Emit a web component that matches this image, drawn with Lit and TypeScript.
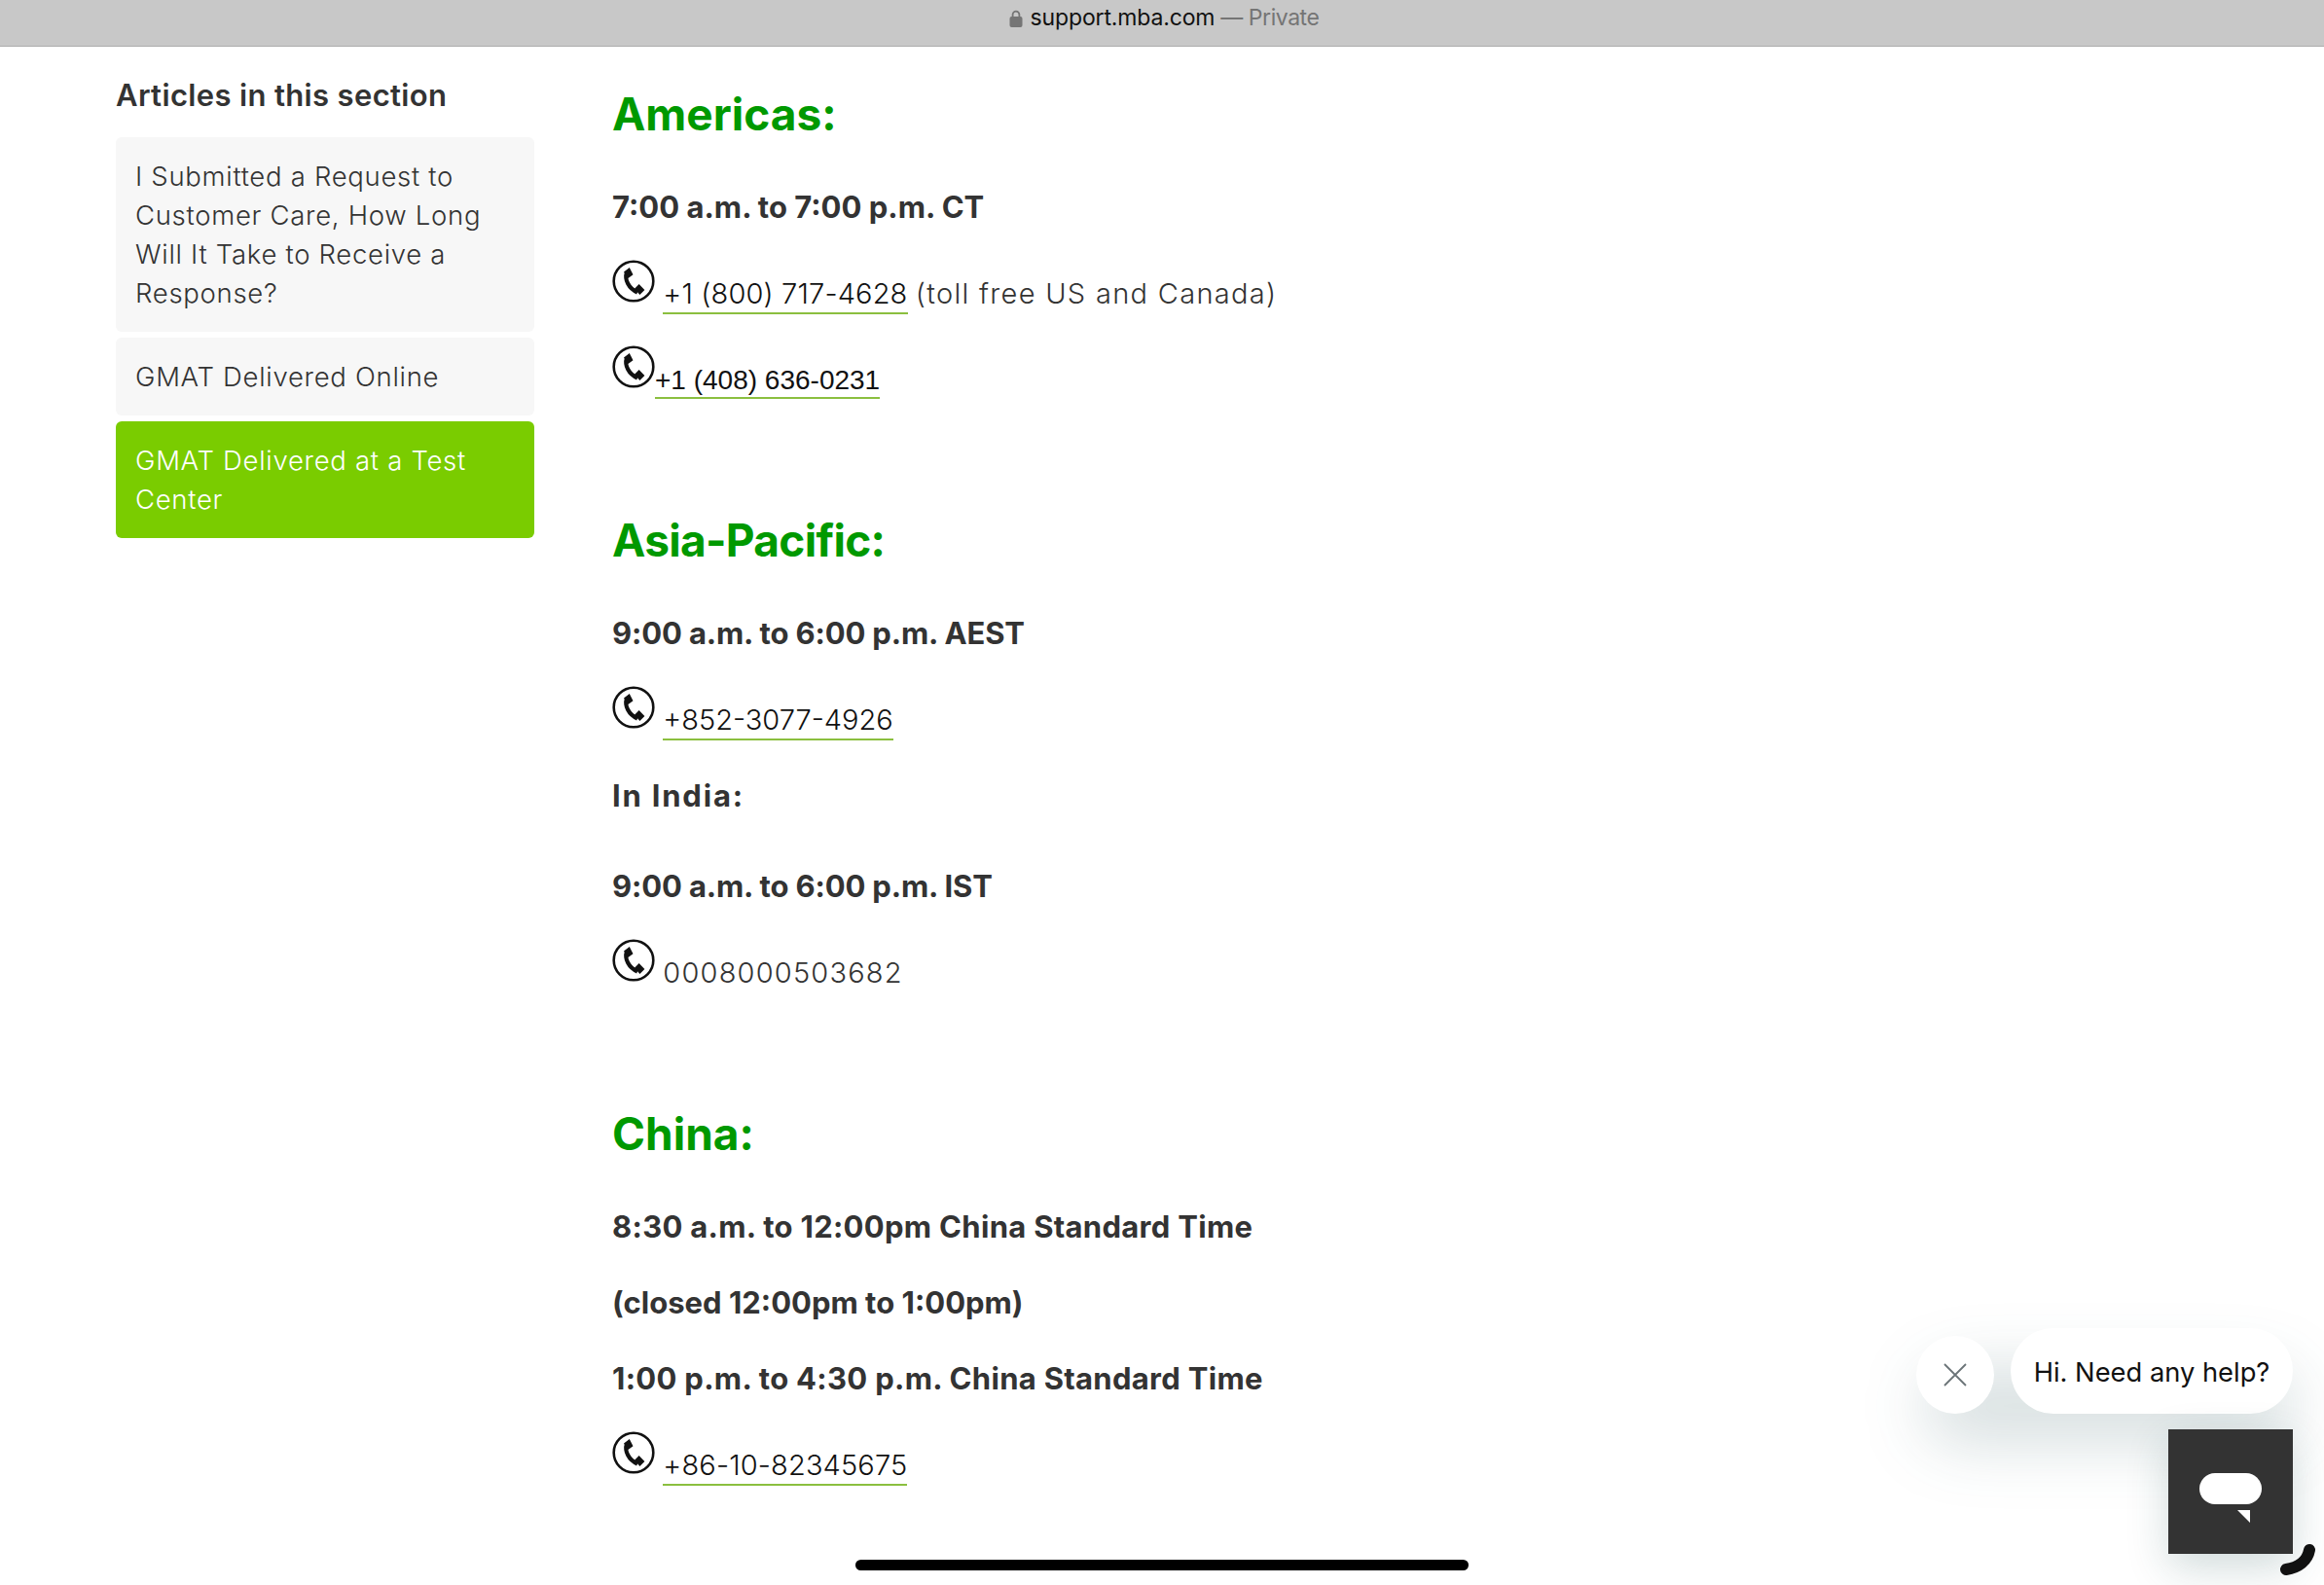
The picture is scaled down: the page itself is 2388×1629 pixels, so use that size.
import { LitElement, html, css } from "lit";
import { customElement } from "lit/decorators.js";

const phoneIcon = html`<svg class="ph" viewBox="0 0 44 44" aria-hidden="true">
  <circle cx="22" cy="22" r="20.3" fill="none" stroke="#111" stroke-width="2.6"></circle>
  <path d="M15 13 C12.5 20.5 17 29.5 26 33.5" fill="none" stroke="#111" stroke-width="4.2"></path>
  <path d="M12 12.5 L17.8 8 L21.5 15.2 L16.4 19 Z M23 29.8 L27.6 25 L33.4 31 L28.4 36 Z" fill="#111"></path>
</svg>`;

@customElement("app-root")
export class AppRoot extends LitElement {
  static styles = css`
    :host { display: block; width: 2388px; height: 1629px; position: relative; overflow: hidden; background: #fff; font-family: Inter, "Liberation Sans", sans-serif; color: #333; }
    .bar { height: 47px; background: #c8c8c8; border-bottom: 1px solid #adadad; display: flex; justify-content: center; align-items: flex-start; font-size: 23px; line-height: 37px; letter-spacing: -0.15px; color: #111; }
    .bar .inner { display: flex; align-items: center; margin-left: 4px; }
    .lock { width: 14px; height: 20px; margin-right: 8px; }
    .bar .dim { color: #757575; margin-left: 6px; letter-spacing: -0.45px; }
    .main { display: flex; padding-left: 119px; }
    .side { width: 430px; margin-right: 80px; flex: none; padding-top: 28px; }
    .side h3 { margin: 0 0 21px; font-size: 31px; line-height: 44px; font-weight: 600; letter-spacing: 0.35px; }
    .item { display: block; background: #f7f7f7; border-radius: 6px; padding: 20px; margin-bottom: 6px; font-size: 27.5px; line-height: 40px; font-weight: 300; letter-spacing: 0.7px; color: #333; }
    .item.on { background: #7acc00; color: #fff; }
    .content { flex: 1; padding-top: 43px; }
    h2 { margin: 0 0 50px; font-size: 46px; line-height: 52px; font-weight: 700; color: #090; }
    h2.next { margin-top: 86px; }
    h2.asia { letter-spacing: -0.7px; }
    p { margin: 0 0 38px; font-size: 31px; line-height: 40px; font-weight: 700; letter-spacing: 0.3px; }
    p.t0 { letter-spacing: 0; }
    p.t1 { letter-spacing: -0.15px; }
    p.india { margin-bottom: 53px; letter-spacing: 1.8px; }
    .row { margin: -4px 0 0; height: 88px; font-size: 29px; line-height: 44px; font-weight: 300; letter-spacing: 0.15px; color: #333; white-space: nowrap; }
    .row + .row { margin-top: 0; }
    .row.tight { height: 93px; }
    .ph { width: 44px; height: 44px; vertical-align: baseline; margin-bottom: 1px; }
    a { color: #111; text-decoration: none; border-bottom: 2px solid #8bbf3f; padding-bottom: 2px; }
    a.tightnum { letter-spacing: 0; }
    a.arial { font-family: "Liberation Sans", Arial, sans-serif; font-weight: 400; font-size: 28px; letter-spacing: 0; }
    .wide { letter-spacing: 1.3px; }
    .num { letter-spacing: 1.2px; }
    .item-link { border: 0; padding-bottom: 20px; }
    .shadow { position: absolute; left: 1975px; top: 1405px; width: 385px; height: 80px; border-radius: 40px; background: rgba(23,73,77,.17); filter: blur(32px); }
    .close { position: absolute; left: 1969px; top: 1373px; width: 80px; height: 80px; border-radius: 50%; background: #fff; display: flex; align-items: center; justify-content: center; }
    .close svg { width: 24px; height: 24px; }
    .bubble { position: absolute; left: 2066px; top: 1365px; width: 290px; height: 88px; border-radius: 44px; background: #fff; font-size: 27.3px; line-height: 92px; text-align: center; color: #111; white-space: nowrap; }
    .launcher { position: absolute; left: 2228px; top: 1469px; width: 128px; height: 128px; background: #333; box-shadow: 0 14px 44px rgba(23,73,77,.2); }
    .launcher svg { display: block; width: 128px; height: 128px; }
    .curl { position: absolute; left: 2340px; top: 1582px; width: 44px; height: 40px; }
    .home { position: absolute; left: 879px; top: 1603px; width: 630px; height: 11px; border-radius: 6px; background: #000; }
  `;

  private ph(content: unknown, cls = "") {
    return html`<div class="row ${cls}">${phoneIcon}${content}</div>`;
  }

  render() {
    return html`
      <div class="bar"><div class="inner">
        <svg class="lock" viewBox="0 0 14 20"><path d="M3.6 9V6a3.4 3.4 0 0 1 6.8 0v3" fill="none" stroke="#757575" stroke-width="1.8"></path><rect x="0.5" y="8" width="13" height="11" rx="2" fill="#757575"></rect></svg>
        <span>support.mba.com</span><span class="dim">— Private</span>
      </div></div>
      <div class="main">
        <aside class="side">
          <h3>Articles in this section</h3>
          <a class="item item-link">I Submitted a Request to Customer Care, How Long Will It Take to Receive a Response?</a>
          <a class="item item-link">GMAT Delivered Online</a>
          <a class="item item-link on">GMAT Delivered at a Test Center</a>
        </aside>
        <section class="content">
          <h2>Americas:</h2>
          <p class="t0">7:00 a.m. to 7:00 p.m. CT</p>
          ${this.ph(html` <a>+1 (800) 717-4628</a> <span class="wide">(toll free US and Canada)</span>`)}
          ${this.ph(html`<a class="arial">+1 (408) 636-0231</a>`)}
          <h2 class="next asia">Asia-Pacific:</h2>
          <p class="t1">9:00 a.m. to 6:00 p.m. AEST</p>
          ${this.ph(html` <a class="tightnum">+852-3077-4926</a>`, "tight")}
          <p class="india">In India:</p>
          <p class="t1">9:00 a.m. to 6:00 p.m. IST</p>
          ${this.ph(html` <span class="num">0008000503682</span>`)}
          <h2 class="next">China:</h2>
          <p>8:30 a.m. to 12:00pm China Standard Time</p>
          <p class="t0">(closed 12:00pm to 1:00pm)</p>
          <p>1:00 p.m. to 4:30 p.m. China Standard Time</p>
          ${this.ph(html` <a>+86-10-82345675</a>`)}
        </section>
      </div>
      <div class="shadow"></div>
      <div class="close"><svg viewBox="0 0 24 24"><path d="M1 1 L23 23 M23 1 L1 23" stroke="#6b7478" stroke-width="1.8" fill="none"></path></svg></div>
      <div class="bubble">Hi. Need any help?</div>
      <div class="launcher"><svg viewBox="0 0 128 128"><rect x="32" y="45" width="64" height="32" rx="16" fill="#fff"></rect><path d="M71 83 H84 V96 Z" fill="#fff"></path></svg></div>
      <svg class="curl" viewBox="0 0 44 40"><path d="M33 11 C31 22 22 29 9 31" fill="none" stroke="#111" stroke-width="12" stroke-linecap="round"></path></svg>
      <div class="home"></div>
    `;
  }
}
